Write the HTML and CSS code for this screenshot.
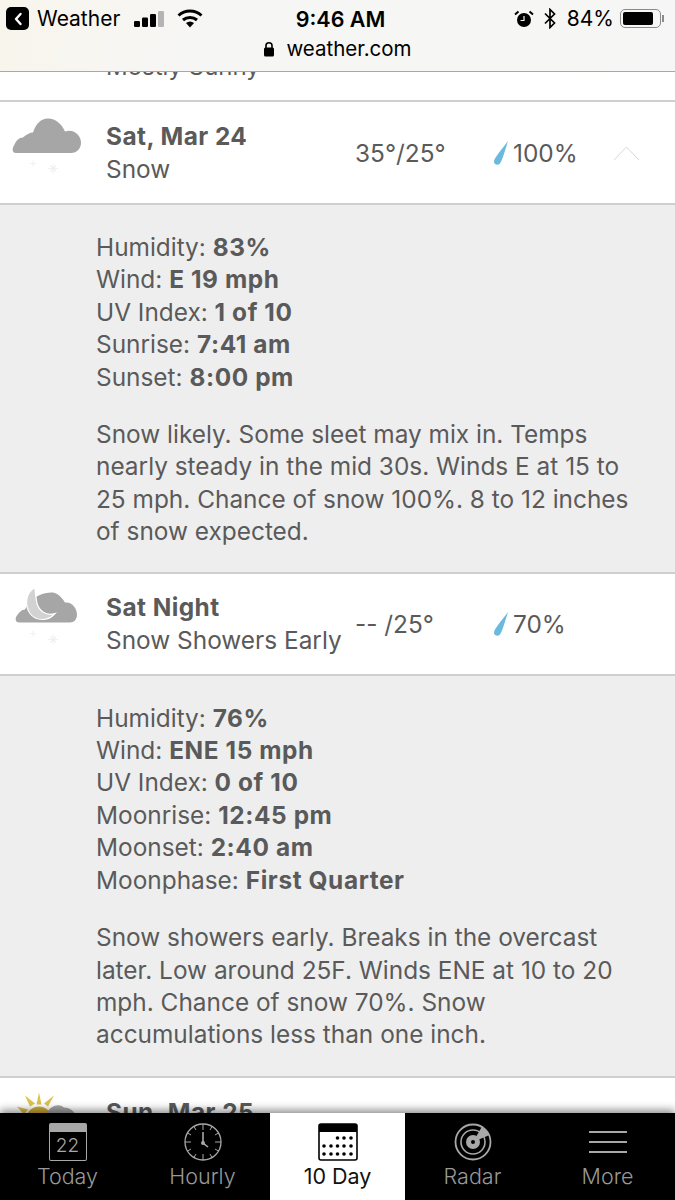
FILE: index.html
```html
<!DOCTYPE html>
<html lang="en">
<head>
  <meta charset="UTF-8" />
  <title>10 Day Weather</title>
  <link rel="stylesheet" href="styles.css">
</head>
<body>
  <div class="page">
    <div class="topbar">
      <div class="status">
        <div class="status-left">
          <span class="back"><svg width="12" height="16" viewBox="0 0 12 16"><path d="M8.5 3 L4 8 L8.5 13" fill="none" stroke="#fff" stroke-width="2.4" stroke-linecap="round" stroke-linejoin="round"/></svg></span>
          <span class="app">Weather</span>
          <svg class="signal" width="30" height="16" viewBox="0 0 30 16">
            <rect x="0" y="10" width="6" height="6" rx="1.2" fill="#000"/>
            <rect x="8" y="6.5" width="6" height="9.5" rx="1.2" fill="#000"/>
            <rect x="16" y="3" width="6" height="13" rx="1.2" fill="#000"/>
            <rect x="24" y="0" width="6" height="16" rx="1.2" fill="#b4b4b4"/>
          </svg>
          <svg class="wifi" width="26" height="19" viewBox="0 0 26 19">
            <path d="M1.5 6.5 C8 0.5 18 0.5 24.5 6.5" fill="none" stroke="#000" stroke-width="3"/>
            <path d="M6 11 C10 7.5 16 7.5 20 11" fill="none" stroke="#000" stroke-width="3"/>
            <path d="M9 14 C11.5 12 14.5 12 17 14 L13 18.5 Z" fill="#000"/>
          </svg>
        </div>
        <div class="clock">9:46 AM</div>
        <div class="status-right">
          <svg width="20" height="18" viewBox="0 0 20 18">
            <circle cx="10" cy="10" r="7" fill="#000"/>
            <path d="M10 6 V10.5 H6.5" fill="none" stroke="#f6f6f6" stroke-width="1.2"/>
            <path d="M1 4.5 L4.5 1.5 M19 4.5 L15.5 1.5" stroke="#000" stroke-width="2"/>
          </svg>
          <svg class="bt" width="12" height="21" viewBox="0 0 12 21">
            <path d="M1 5.5 L10.5 15 L6 19.5 V1.5 L10.5 6 L1 15.5" fill="none" stroke="#000" stroke-width="1.7"/>
          </svg>
          <span class="pct">84%</span>
          <span class="battery"><span class="battery-fill"></span></span>
          <span class="battery-tip"></span>
        </div>
      </div>
      <div class="url">
        <svg width="12" height="16" viewBox="0 0 12 16">
          <path d="M3 7 V4.5 C3 0.8 9 0.8 9 4.5 V7" fill="none" stroke="#000" stroke-width="1.6"/>
          <rect x="1" y="6.5" width="10" height="9" rx="1.5" fill="#000"/>
        </svg>
        <span>weather.com</span>
      </div>
    </div>

    <div class="partial">Mostly Sunny</div>

    <div class="day">
      <svg class="day-icon" width="74" height="80" viewBox="0 -4.5 74 80">
        <path d="M8 35.5 C4 35.5 4 31 6 28 C8 23 11 20 15 20 C18 17 22 15 25 15 C28 6 33 1 40 1 C48 1 54 7 57 14 C66 11 73 18 73 25 C73 31 69 35.5 63 35.5 Z" fill="#a6a6a6"/>
        <g stroke="#f1f1f1" stroke-width="1.1">
          <path d="M25 43 V49 M22 46 H28"/>
          <path d="M45 46 V56 M40 51 H50 M42 48 L48 54 M48 48 L42 54"/>
        </g>
      </svg>
      <div class="day-name">
        <div class="day-title">Sat, Mar 24</div>
        <div class="day-sky">Snow</div>
      </div>
      <div class="day-temp">35°/25°</div>
      <div class="day-rain">
        <svg width="16" height="26" viewBox="0 0 16 26"><path d="M15 1 C13 7 10 19 7 23.5 C5 25.5 1.5 25 1 22 C0.8 19.5 3 17 5 14 C8 10 12 5 15 1 Z" fill="#6cb9de"/></svg>
        <span>100%</span>
      </div>
      <svg class="chevron" width="27" height="16" viewBox="0 0 27 16"><path d="M1 15 L13.5 2 L26 15" fill="none" stroke="#d8d8d8" stroke-width="1"/></svg>
    </div>

    <div class="detail detail-first">
      <ul class="facts">
        <li>Humidity: <b>83%</b></li>
        <li>Wind: <b>E 19 mph</b></li>
        <li>UV Index: <b>1 of 10</b></li>
        <li>Sunrise: <b>7:41 am</b></li>
        <li>Sunset: <b>8:00 pm</b></li>
      </ul>
      <p class="summary">Snow likely. Some sleet may mix in. Temps<br>nearly steady in the mid 30s. Winds E at 15 to<br>25 mph. Chance of snow 100%. 8 to 12 inches<br>of snow expected.</p>
    </div>

    <div class="day day-short">
      <svg class="day-icon" width="74" height="80" viewBox="0 -4.5 74 80">
        <path d="M11 34 C7 34 7 29 9 27 C11 24 14 21 17 21 C20 12 32 3 45 4 C50 5 54 9 57 14 C64 13 69 20 69 26 C69 31 66 34 62 34 Z" fill="#a6a6a6"/>
        <path d="M27 -1 C18 4 16 16 22 25 C28 33 40 33 47 25 C38 28 31 22 29 15 C28 9 27 4 27 -1 Z" fill="#d2d2d2" stroke="#fff" stroke-width="1.2"/>
        <g stroke="#f1f1f1" stroke-width="1.1">
          <path d="M25 42 V48 M22 45 H28"/>
          <path d="M45 46 V56 M40 51 H50 M42 48 L48 54 M48 48 L42 54"/>
        </g>
      </svg>
      <div class="day-name">
        <div class="day-title">Sat Night</div>
        <div class="day-sky">Snow Showers Early</div>
      </div>
      <div class="day-temp">-- /25°</div>
      <div class="day-rain">
        <svg width="16" height="26" viewBox="0 0 16 26"><path d="M15 1 C13 7 10 19 7 23.5 C5 25.5 1.5 25 1 22 C0.8 19.5 3 17 5 14 C8 10 12 5 15 1 Z" fill="#6cb9de"/></svg>
        <span>70%</span>
      </div>
    </div>

    <div class="detail">
      <ul class="facts">
        <li>Humidity: <b>76%</b></li>
        <li>Wind: <b>ENE 15 mph</b></li>
        <li>UV Index: <b>0 of 10</b></li>
        <li>Moonrise: <b>12:45 pm</b></li>
        <li>Moonset: <b>2:40 am</b></li>
        <li>Moonphase: <b>First Quarter</b></li>
      </ul>
      <p class="summary">Snow showers early. Breaks in the overcast<br>later. Low around 25F. Winds ENE at 10 to 20<br>mph. Chance of snow 70%. Snow<br>accumulations less than one inch.</p>
    </div>

    <div class="day day-next">
      <svg class="day-icon" width="74" height="80" viewBox="0 -4.5 74 80">
        <g fill="#dcc24a">
          <path d="M28.5 12 L31 0 L33.5 12 Z"/>
          <path d="M22 14 L17 3 L27 11 Z"/>
          <path d="M40 14 L46 3 L36 11 Z"/>
          <path d="M16 22 L9 14 L20 17 Z"/>
        </g>
        <circle cx="31" cy="27" r="13" fill="#cfae3a"/>
        <path d="M38 24 C40 14 50 10 56 15 C62 15 68 19 68 26 H38 Z" fill="#a6a6a6"/>
      </svg>
      <div class="day-name">
        <div class="day-title">Sun, Mar 25</div>
      </div>
    </div>

    <nav class="tabs">
      <a class="tab">
        <span class="cal"><span class="cal-num">22</span></span>
        Today
      </a>
      <a class="tab">
        <svg width="38" height="38" viewBox="0 0 38 38">
          <g fill="none" stroke="#a8a8a8">
            <circle cx="19" cy="19" r="18" stroke-width="1.3"/>
            <path d="M19 1 V7 M19 31 V37 M1 19 H7 M31 19 H37 M10 3.5 L12 7 M28 3.5 L26 7 M3.5 10 L7 12 M34.5 10 L31 12 M3.5 28 L7 26 M34.5 28 L31 26 M10 34.5 L12 31 M28 34.5 L26 31" stroke-width="1"/>
            <path d="M19 9 V20 L24 24" stroke-width="1.6"/>
          </g>
          <circle cx="19" cy="20" r="2" fill="#a8a8a8"/>
        </svg>
        Hourly
      </a>
      <a class="tab tab-on">
        <svg width="40" height="38" viewBox="0 0 40 38">
          <rect x="1" y="1" width="38" height="36" rx="2" fill="#fff" stroke="#000" stroke-width="1.6"/>
          <path d="M1 3 a2 2 0 0 1 2 -2 H37 a2 2 0 0 1 2 2 V9 H1 Z" fill="#000"/>
          <g fill="#000">
            <circle cx="19.5" cy="15" r="1.8"/><circle cx="26" cy="15" r="1.8"/><circle cx="33" cy="15" r="1.8"/>
            <circle cx="6" cy="23" r="1.8"/><circle cx="13" cy="23" r="1.8"/><circle cx="19.5" cy="23" r="1.8"/><circle cx="26" cy="23" r="1.8"/><circle cx="33" cy="23" r="1.8"/>
            <circle cx="6" cy="31" r="1.8"/><circle cx="13" cy="31" r="1.8"/><circle cx="19.5" cy="31" r="1.8"/><circle cx="26" cy="31" r="1.8"/><circle cx="33" cy="31" r="1.8"/>
          </g>
        </svg>
        10 Day
      </a>
      <a class="tab">
        <svg width="38" height="38" viewBox="0 0 38 38">
          <g fill="none" stroke="#a8a8a8">
            <circle cx="19" cy="19" r="17.5" stroke-width="1.8"/>
            <circle cx="19" cy="19" r="12" stroke-width="1.6"/>
          </g>
          <path d="M19 19 L28 3.5 A18 18 0 0 1 35.5 12 Z" fill="#a8a8a8"/>
          <circle cx="19" cy="19" r="7" fill="#a8a8a8"/>
          <circle cx="19" cy="19" r="2" fill="#000"/>
        </svg>
        Radar
      </a>
      <a class="tab">
        <span class="burger"><i></i><i></i><i></i></span>
        More
      </a>
    </nav>
  </div>
</body>
</html>
```

FILE: styles.css
```css
html, body {
  margin: 0;
  padding: 0;
}
body {
  font-family: Inter, "Liberation Sans", sans-serif;
  background-color: #fff;
  color: #5a5a5a;
}
.page {
  position: relative;
  width: 675px;
  height: 1200px;
  overflow: hidden;
}

/* phone status bar + url, sits over the scrolled page */
.topbar {
  position: absolute;
  top: 0;
  left: 0;
  right: 0;
  height: 71px;
  background: linear-gradient(100deg, #f8f5ec 0%, #f6f6f5 30%, #f6f6f6 100%);
  border-bottom: 1px solid #a9a9a9;
  color: #000;
}
.status {
  display: grid;
  grid-template-columns: 1fr auto 1fr;
  align-items: center;
  height: 37px;
  padding: 0 11px 0 6px;
}
.status-left, .status-right {
  display: flex;
  align-items: center;
  font-size: 21px;
}
.status-right {
  justify-content: flex-end;
}
.back {
  display: flex;
  align-items: center;
  justify-content: center;
  width: 23px;
  height: 23px;
  background: #000;
  border-radius: 5px;
  margin-right: 8px;
}
.app {
  margin-right: 14px;
}
.wifi {
  margin-left: 13px;
}
.clock {
  font-size: 21.5px;
  font-weight: 600;
  padding-left: 11px;
}
.bt {
  margin: 0 11px 0 10px;
}
.battery {
  display: block;
  box-sizing: border-box;
  width: 41px;
  height: 19px;
  margin-left: 6px;
  padding: 2px;
  border: 1.5px solid #8a8a8a;
  border-radius: 5px;
}
.battery-fill {
  display: block;
  width: 30px;
  height: 100%;
  background: #000;
  border-radius: 2px;
}
.battery-tip {
  width: 2px;
  height: 7px;
  margin-left: 1px;
  background: #8a8a8a;
}
.url {
  display: flex;
  justify-content: center;
  align-items: center;
  gap: 11px;
  font-size: 20.5px;
  margin-top: -1px;
}

.partial {
  height: 100px;
  border-bottom: 2px solid #cfcfcf;
  padding-left: 106px;
  font-size: 24px;
  line-height: 133px;
  overflow: hidden;
}

.day {
  display: grid;
  grid-template-columns: 106px 249px 138px 120px 27px;
  align-items: center;
  height: 101px;
  border-bottom: 2px solid #cfcfcf;
  background: #fff;
}
.day-short {
  height: 100px;
}
.day-next {
  align-items: start;
}
.day-next .day-icon {
  margin-top: 10px;
}
.day-next .day-name {
  padding-top: 18px;
}
.day-icon {
  margin-left: 8px;
}
.day-name {
  padding-top: 1px;
}
.day-title {
  font-size: 24.4px;
  font-weight: 700;
  letter-spacing: 0.45px;
  line-height: 33px;
}
.day-sky {
  font-size: 24.4px;
  line-height: 33px;
}
.day-temp {
  font-size: 24.4px;
}
.day-rain {
  display: flex;
  align-items: center;
  gap: 4px;
  font-size: 24.4px;
}
.chevron {
  display: block;
}

.detail {
  background: #eeeeee;
  padding: 26px 40px 25px 96px;
  border-bottom: 2px solid #cfcfcf;
  font-size: 24.4px;
  line-height: 32.4px;
}
.detail-first {
  padding-bottom: 24px;
}
.detail b {
  letter-spacing: 0.6px;
}
.facts {
  list-style: none;
  margin: 0;
  padding: 0;
}
.summary {
  margin: 25px 0 0 0;
}

/* bottom tabs, fixed over the page */
.tabs {
  position: absolute;
  left: 0;
  right: 0;
  bottom: 0;
  height: 87px;
  display: grid;
  grid-template-columns: repeat(5, 135px);
  background: #000;
  box-shadow: 0 -3px 8px rgba(0,0,0,0.45);
}
.tab {
  display: flex;
  flex-direction: column;
  align-items: center;
  padding-top: 10px;
  gap: 1px;
  font-size: 21.5px;
  font-weight: 300;
  line-height: 28px;
  color: #989898;
}
.tab-on {
  background: #fff;
  color: #111;
  font-weight: 400;
}
.tab svg {
  display: block;
}
.cal {
  box-sizing: border-box;
  width: 38px;
  height: 38px;
  border: 1.5px solid #a8a8a8;
  border-top: 9px solid #a8a8a8;
  border-radius: 2px;
  text-align: center;
  font-size: 19px;
  font-weight: 300;
  line-height: 27px;
  color: #a8a8a8;
}
.burger {
  display: flex;
  flex-direction: column;
  justify-content: center;
  gap: 8px;
  width: 38px;
  height: 38px;
}
.burger i {
  display: block;
  height: 2px;
  background: #a8a8a8;
}
```
